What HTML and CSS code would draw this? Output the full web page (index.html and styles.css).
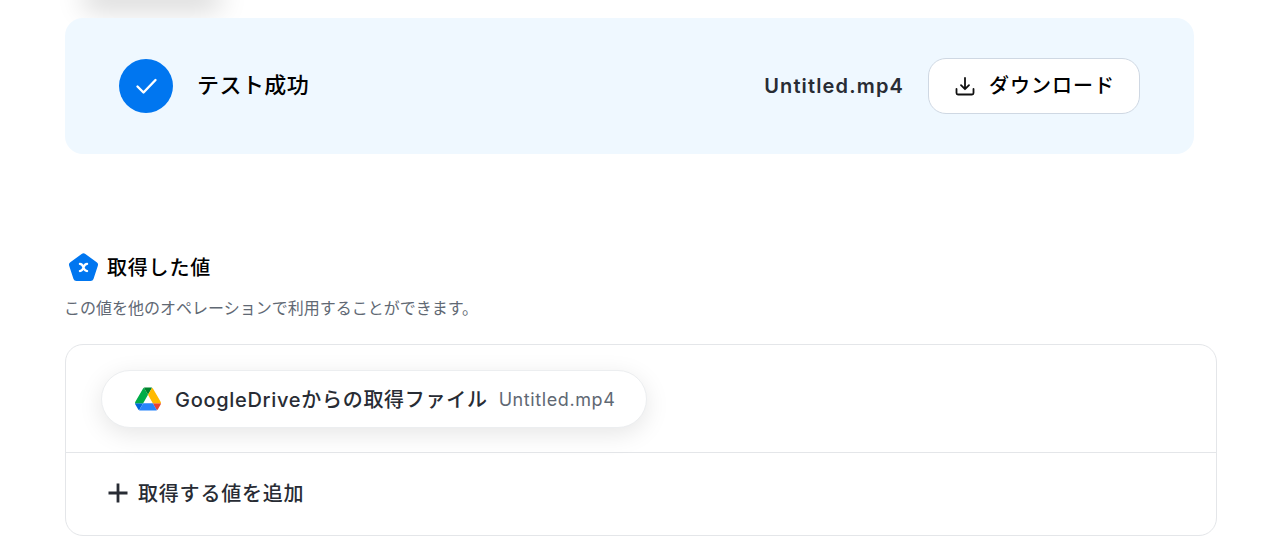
FILE: index.html
```html
<!DOCTYPE html>
<html lang="ja">
<head>
  <meta charset="UTF-8" />
  <meta name="viewport" content="width=device-width, initial-scale=1.0"/>
  <title>テスト成功</title>
  <link rel="stylesheet" href="styles.css">
</head>
<body>
  <div class="page">
    <div class="prev-button"></div>

    <div class="result-banner">
      <div class="result-status">
        <span class="status-icon">
          <svg width="24" height="24" viewBox="0 0 24 24" fill="none" stroke="#fff" stroke-width="2.400" stroke-linecap="round" stroke-linejoin="round"><path d="M3.500 12.500l6 6L21.500 6"/></svg>
        </span>
        <span class="status-text">テスト成功</span>
      </div>
      <div class="result-file">
        <span class="file-name">Untitled.mp4</span>
        <button class="download-btn">
          <svg width="24" height="24" viewBox="0 0 24 24" fill="none" stroke="#111" stroke-width="1.800" stroke-linecap="round" stroke-linejoin="round"><path d="M12 4v11M8 11.200l4 4 4-4M3.500 15v4a1.500 1.500 0 0 0 1.500 1.500h14a1.500 1.500 0 0 0 1.500-1.500v-4"/></svg>
          <span class="download-label">ダウンロード</span>
        </button>
      </div>
    </div>

    <div class="values-head">
      <svg class="values-icon" width="33" height="33" viewBox="0 0 32 32"><path d="M14.200 2.900a3 3 0 0 1 3.600 0l11 7.900a3 3 0 0 1 1.100 3.400l-4.200 12.900a3 3 0 0 1-2.900 2.100H9.200a3 3 0 0 1-2.900-2.100L2.100 14.200a3 3 0 0 1 1.100-3.400z" fill="#0076f0"/><path d="M12.500 12.500c2.200 0 2.700 1.200 3.500 3.500s1.300 3.500 3.500 3.500M19.500 12.500c-2.200 0-2.700 1.200-3.500 3.500s-1.300 3.500-3.500 3.500" fill="none" stroke="#fff" stroke-width="2.200" stroke-linecap="round"/></svg>
      <h2 class="values-title">取得した値</h2>
    </div>
    <p class="values-desc">この値を他のオペレーションで利用することができます。</p>

    <div class="values-box">
      <div class="values-row">
        <div class="value-pill">
          <svg width="26" height="24" viewBox="0 0 87.300 78"><path d="M6.600 66.850l3.850 6.650c.8 1.400 1.950 2.500 3.300 3.300L27.500 53H0c0 1.550.4 3.100 1.200 4.500z" fill="#0066da"/><path d="M43.650 25L29.900 1.200c-1.350.8-2.500 1.900-3.300 3.300L1.200 48.500A9 9 0 0 0 0 53h27.500z" fill="#00ac47"/><path d="M73.550 76.800c1.350-.8 2.500-1.900 3.300-3.300l1.600-2.750L86.100 57.500c.8-1.400 1.200-2.950 1.200-4.500H59.800l5.850 11.500z" fill="#ea4335"/><path d="M43.650 25L57.400 1.200C56.050.4 54.500 0 52.900 0H34.400c-1.600 0-3.150.45-4.500 1.200z" fill="#00832d"/><path d="M59.800 53H27.500L13.750 76.800c1.350.8 2.900 1.200 4.500 1.200h50.800c1.600 0 3.150-.45 4.500-1.200z" fill="#2684fc"/><path d="M73.400 26.500L60.700 4.500c-.8-1.400-1.950-2.500-3.300-3.300L43.650 25 59.800 53h27.450c0-1.550-.4-3.100-1.200-4.500z" fill="#ffba00"/></svg>
          <span class="pill-label">GoogleDriveからの取得ファイル</span>
          <span class="pill-value">Untitled.mp4</span>
        </div>
      </div>
      <div class="add-row">
        <svg width="24" height="24" viewBox="0 0 24 24" fill="none" stroke="#282c34" stroke-width="2.800"><path d="M12 2.500v19M2.500 12h19"/></svg>
        <span class="add-label">取得する値を追加</span>
      </div>
    </div>
  </div>
</body>
</html>
```

FILE: styles.css
```css
html, body {
  margin: 0;
  height: 100%;
  overflow: hidden;
}

body {
  font-family: Inter, 'Noto Sans CJK JP', sans-serif;
  background-color: #fff;
  color: #282c34;
}

.page {
  width: 1152px;
  margin-left: 65px;
}

.prev-button {
  width: 140px;
  height: 20px;
  margin: -20px 0 18px 17px;
  border-radius: 10px;
  box-shadow: 0 8px 28px rgba(0, 0, 0, 0.2);
}

.result-banner {
  display: flex;
  justify-content: space-between;
  align-items: center;
  box-sizing: border-box;
  width: 1129px;
  height: 136px;
  padding: 0 54px;
  background-color: #eff8ff;
  border-radius: 18px;
}

.result-status, .result-file {
  display: flex;
  align-items: center;
}

.status-icon {
  display: flex;
  justify-content: center;
  align-items: center;
  width: 54px;
  height: 54px;
  border-radius: 50%;
  background-color: #0076f0;
}

.status-text {
  margin-left: 24px;
  padding-bottom: 6px;
  font-size: 22px;
  font-weight: 500;
  letter-spacing: 0.45px;
  color: #000;
}

.file-name {
  font-size: 20px;
  font-weight: 600;
  letter-spacing: 1.15px;
}

.download-btn {
  display: flex;
  justify-content: center;
  align-items: center;
  gap: 12px;
  box-sizing: border-box;
  width: 212px;
  height: 56px;
  margin-left: 24px;
  background-color: #fff;
  border: 1px solid #cfd8e3;
  border-radius: 18px;
  font-family: inherit;
  font-size: 20px;
  font-weight: 500;
  color: #000;
}

.download-label {
  padding-bottom: 3px;
  letter-spacing: 1px;
}

.values-head {
  display: flex;
  align-items: center;
  gap: 7px;
  margin-top: 97px;
  margin-left: 2px;
}

.values-title {
  margin: 0;
  padding-bottom: 2px;
  font-size: 20px;
  font-weight: 500;
  letter-spacing: 0.8px;
  color: #000;
}

.values-desc {
  margin: 13px 0 25px -1px;
  font-size: 16px;
  line-height: 22px;
  color: #606873;
}

.values-box {
  border: 1px solid #e4e6e9;
  border-radius: 18px;
}

.values-row {
  display: flex;
  height: 108px;
  padding: 25px 36px 0 36px;
  box-sizing: border-box;
  border-bottom: 1px solid #e4e6e9;
}

.value-pill {
  display: flex;
  align-items: center;
  box-sizing: border-box;
  height: 58px;
  margin-left: -1px;
  padding: 0 31px 0 33px;
  background-color: #fff;
  border: 1px solid #eceef0;
  border-radius: 29px;
  box-shadow: 0 6px 24px rgba(0, 0, 0, 0.1);
}

.pill-label {
  margin-left: 14px;
  padding-bottom: 2px;
  font-size: 20px;
  font-weight: 500;
  letter-spacing: 0.7px;
}

.pill-value {
  margin-left: 11px;
  font-size: 18px;
  letter-spacing: 0.6px;
  color: #606873;
}

.add-row {
  display: flex;
  align-items: center;
  gap: 8px;
  box-sizing: border-box;
  height: 82px;
  padding: 0 0 3px 40px;
  font-size: 20px;
  font-weight: 500;
}

.add-label {
  padding-bottom: 1px;
  letter-spacing: 0.8px;
}
```
